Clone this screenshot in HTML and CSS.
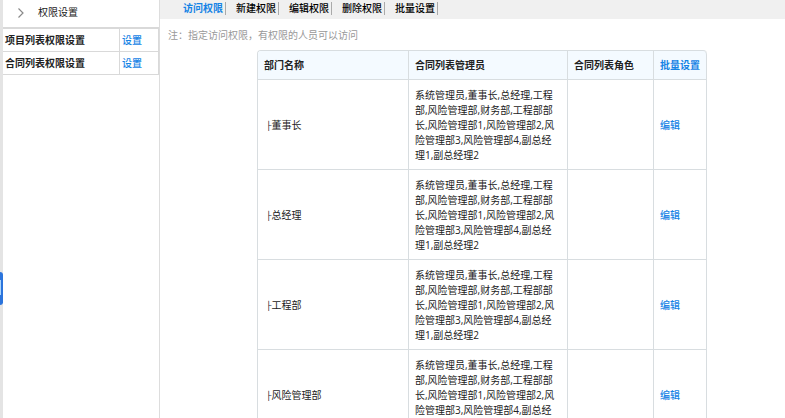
FILE: index.html
```html
<!DOCTYPE html>
<html lang="zh-CN">
<head>
<meta charset="utf-8">
<title>权限设置</title>
<link rel="stylesheet" href="styles.css">
</head>
<body>
<div class="app">
  <button class="handle" type="button" aria-label="展开"></button>
  <aside class="sidebar">
    <header class="side-title">
      <svg class="chevron" viewBox="0 0 8 12" aria-hidden="true"><path d="M1.5 1.5 6 6 1.5 10.5"/></svg>
      <span>权限设置</span>
    </header>
    <table class="side-table">
      <tbody>
        <tr><th scope="row">项目列表权限设置</th><td><a href="#project">设置</a></td></tr>
        <tr><th scope="row">合同列表权限设置</th><td><a href="#contract">设置</a></td></tr>
      </tbody>
    </table>
  </aside>
  <main class="main">
    <nav class="tabs">
      <a class="tab active" href="#visit">访问权限</a>
      <a class="tab" href="#create">新建权限</a>
      <a class="tab" href="#edit">编辑权限</a>
      <a class="tab" href="#delete">删除权限</a>
      <a class="tab" href="#batch">批量设置</a>
    </nav>
    <p class="note">注：指定访问权限，有权限的人员可以访问</p>
    <table class="grid">
      <colgroup><col class="c-dept"><col class="c-admin"><col class="c-role"><col class="c-action"></colgroup>
      <thead>
        <tr><th>部门名称</th><th>合同列表管理员</th><th>合同列表角色</th><th><a href="#batch-set">批量设置</a></th></tr>
      </thead>
      <tbody>
        <tr>
          <td class="dept"><span class="branch">├</span>董事长</td>
          <td>系统管理员,董事长,总经理,工程部,风险管理部,财务部,工程部部长,风险管理部1,风险管理部2,风险管理部3,风险管理部4,副总经理1,副总经理2</td>
          <td></td>
          <td><a href="#e1">编辑</a></td>
        </tr>
        <tr>
          <td class="dept"><span class="branch">├</span>总经理</td>
          <td>系统管理员,董事长,总经理,工程部,风险管理部,财务部,工程部部长,风险管理部1,风险管理部2,风险管理部3,风险管理部4,副总经理1,副总经理2</td>
          <td></td>
          <td><a href="#e2">编辑</a></td>
        </tr>
        <tr>
          <td class="dept"><span class="branch">├</span>工程部</td>
          <td>系统管理员,董事长,总经理,工程部,风险管理部,财务部,工程部部长,风险管理部1,风险管理部2,风险管理部3,风险管理部4,副总经理1,副总经理2</td>
          <td></td>
          <td><a href="#e3">编辑</a></td>
        </tr>
        <tr>
          <td class="dept"><span class="branch">├</span>风险管理部</td>
          <td>系统管理员,董事长,总经理,工程部,风险管理部,财务部,工程部部长,风险管理部1,风险管理部2,风险管理部3,风险管理部4,副总经理1,副总经理2</td>
          <td></td>
          <td><a href="#e4">编辑</a></td>
        </tr>
      </tbody>
    </table>
  </main>
</div>
</body>
</html>
```
FILE: styles.css
```css
* { box-sizing: border-box; }

body {
  margin: 0;
  background: #fff;
  color: #222;
  font: 10px/15px "Open Sans", "Noto Sans CJK SC", sans-serif;
}

a {
  color: #1583e5;
  font-weight: 500;
  text-decoration: none;
}

.app {
  position: relative;
  display: flex;
  height: 100vh;
  overflow: hidden;
  padding-left: 3px;
  background: linear-gradient(to right, #e4e4e4 3px, #fff 3px);
}

.handle {
  position: absolute;
  top: 272px;
  left: 0;
  width: 3px;
  height: 33px;
  padding: 0;
  border: 1px solid #2b74dc;
  border-width: 8px 2px 10px 0;
  border-radius: 0 3px 3px 0;
  background: #a9d4fb;
}

.sidebar {
  flex: 0 0 157px;
  border-right: 1px solid #ddd;
}

.side-title {
  display: flex;
  align-items: center;
  gap: 13px;
  height: 27px;
  padding: 0 14px 2px;
}

.chevron {
  width: 8px;
  height: 12px;
  fill: none;
  stroke: #8a8a8a;
  stroke-width: 1.2;
}

.side-table {
  width: 100%;
  border-collapse: collapse;
}

.side-table th,
.side-table td {
  height: 23px;
  padding: 2px 2px 0;
  border: 1px solid #d9d9d9;
  border-left: 0;
  text-align: left;
}

.side-table tr:first-child > * { border-top: 2px solid #d9d9d9; }

.side-table td {
  width: 39px;
  border-left: 1px solid #d9d9d9;
}

.main {
  flex: 1 0 0;
  min-width: 0;
}

.tabs {
  display: flex;
  gap: 10px;
  height: 19px;
  padding: 2px 23px;
  background: #f0f0f0;
}

.tab {
  height: 13px;
  padding-right: 2px;
  border-right: 1px solid #aaa;
  color: #000;
  line-height: 13px;
}

.tab.active {
  color: #1583e5;
  font-weight: 700;
}

.note {
  margin: 9px 8px 7px;
  color: #999;
}

.grid {
  width: 450px;
  margin-left: 97px;
  border: 1px solid #d8dde0;
  border-width: 1px 0 0 1px;
  border-radius: 4px 4px 0 0;
  border-spacing: 0;
  table-layout: fixed;
}

.c-dept { width: 151px; }
.c-admin { width: 159px; }
.c-role { width: 86px; }

.grid th,
.grid td {
  padding: 8px 6px 6px;
  border: 1px solid #d8dde0;
  border-width: 0 1px 1px 0;
  text-align: left;
}

.grid th {
  padding: 7px 6px 6px;
  background: #f4faff;
}

.grid .dept { padding-left: 8px; }

.grid th a { font-weight: 700; }
.grid th:first-child { border-top-left-radius: 3px; }
.grid th:last-child { border-top-right-radius: 4px; }

.branch {
  font: 9px/9px "Liberation Mono", monospace;
  vertical-align: 1px;
}
```
